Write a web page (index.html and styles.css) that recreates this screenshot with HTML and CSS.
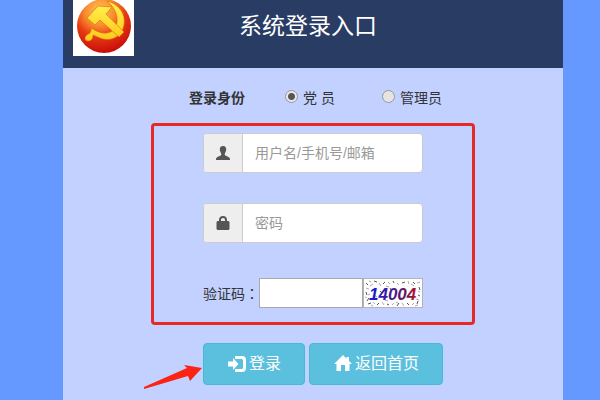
FILE: index.html
```
<!DOCTYPE html>
<html lang="zh-CN">
<head>
<meta charset="utf-8">
<meta name="viewport" content="width=device-width, initial-scale=1">
<title>系统登录入口</title>
<link rel="stylesheet" href="styles.css">
</head>
<body>
<main class="panel">
  <header class="header">
    <svg class="logo" viewBox="0 0 61 56" role="img" aria-label="党徽">
      <defs>
        <radialGradient id="ball" cx="0.42" cy="0.22" r="0.8">
          <stop offset="0" stop-color="#ffc65a"/>
          <stop offset="0.35" stop-color="#f98a2c"/>
          <stop offset="0.6" stop-color="#e53a14"/>
          <stop offset="1" stop-color="#c80a08"/>
        </radialGradient>
        <linearGradient id="gold" x1="0" y1="0" x2="0" y2="1">
          <stop offset="0" stop-color="#fff04a"/>
          <stop offset="1" stop-color="#ffc81c"/>
        </linearGradient>
      </defs>
      <rect width="61" height="56" fill="#fff"/>
      <circle cx="31" cy="26" r="27" fill="url(#ball)"/>
      <path d="M34 1C46 4 53 14 51 25C49 36 40 41 30 39C26 38 23 36 20 35C20 39 18 41 15 41C12 41 11 38 13 36C14 34 16 34 17 33L19 28C24 33 34 35 39 31C47 25 46 11 34 1Z" fill="url(#gold)" stroke="#d96a10" stroke-width="0.6"/>
      <path d="M14 18L25 6L39 7L33 14L51 32L46 37L27 20L22 25Z" fill="url(#gold)" stroke="#d96a10" stroke-width="0.6"/>
    </svg>
    <h1 class="title">系统登录入口</h1>
  </header>

  <form class="form">
    <div class="roles" role="radiogroup" aria-labelledby="role-label">
      <strong class="roles-label" id="role-label">登录身份</strong>
      <label class="role"><input class="radio" type="radio" name="role" checked>党 员</label>
      <label class="role"><input class="radio" type="radio" name="role">管理员</label>
    </div>

    <div class="credentials">
      <div class="group">
        <label class="addon" for="user" aria-label="用户名">
          <svg class="glyph" viewBox="0 0 14 14" aria-hidden="true"><path d="M7 0C9.400 0 10.300 1.600 10.200 3.600C10.100 5.600 9.300 6.600 8.800 7.400V9C9 10 14 10.600 14 13V14H0V13C0 10.600 5 10 5.200 9V7.400C4.700 6.600 3.900 5.600 3.800 3.600C3.700 1.600 4.600 0 7 0Z"/></svg>
        </label>
        <input class="field" id="user" type="text" placeholder="用户名/手机号/邮箱">
      </div>
      <div class="group">
        <label class="addon" for="password" aria-label="密码">
          <svg class="glyph" viewBox="0 0 14 14" aria-hidden="true"><path fill-rule="evenodd" d="M3 5V4C3 1.500 4.500 0 7 0S11 1.500 11 4V5H12.500L13.500 6V13L12.500 14H1.500L.5 13V6L1.500 5ZM5 5H9V4C9 2.700 8.300 2 7 2S5 2.700 5 4Z"/></svg>
        </label>
        <input class="field" id="password" type="password" placeholder="密码">
      </div>
      <div class="captcha">
        <label for="code">验证码<span class="colon" lang="zh-TW">：</span></label>
        <input class="code" id="code" type="text">
        <svg class="captcha-image" viewBox="0 0 60 30">
          <defs>
            <linearGradient id="ink" gradientUnits="userSpaceOnUse" x1="8" y1="0" x2="54" y2="0">
              <stop offset="0" stop-color="#1a1ad0"/>
              <stop offset="0.5" stop-color="#4a1a8a"/>
              <stop offset="0.75" stop-color="#641458"/>
              <stop offset="1" stop-color="#c01428"/>
            </linearGradient>
          </defs>
          <rect x="0.500" y="0.500" width="59" height="29" fill="#fff" stroke="#b4b4b4"/>
          <g fill="none" stroke-width="1">
            <path stroke="#555" d="M3 5l2 2M11 3l3 1M20 6l2-2M30 3l1 2M39 5l3-1M50 4l2 2M3 14l1 3M6 20l-2 3M5 26l3-1M14 27l2-2M24 26l2 1M34 28l2-3M44 25l2 2M54 26l1-3M56 9l1 3M55 17l2 1M17 13l2 2M27 10l1 2"/>
            <path stroke="#b5a5ad" d="M7 8l3-2M16 5l2 3M25 4l2 2M34 5l2 2M45 3l1 3M54 5l3-1M3 10l3 1M2 19l2 1M10 24l2 2M19 24l2 3M29 27l2-2M39 25l2 3M49 27l2-2M53 21l3 1M55 13l2 1M11 17l3 2M37 19l2 1M47 18l2 1"/>
            <path stroke="#9da5c8" d="M6 3l2 1M23 8l3 1M48 6l3 2M8 27l2 1M22 22l3 1M33 24l2 1M5 17l2-1M52 28l3-1"/>
          </g>
          <text class="captcha-text" x="6" y="22" fill="url(#ink)">14004</text>
        </svg>
      </div>
    </div>

    <div class="actions">
      <button class="btn" type="submit">
        <svg class="btn-icon" viewBox="0 0 18 18" aria-hidden="true"><path d="M0 6.500H5V3L10.500 9L5 15V11.500H0ZM7 1H14Q18 1 18 5V13Q18 17 14 17H7V14H13.500Q15 14 15 12.500V5.500Q15 4 13.500 4H7Z"/></svg>登录
      </button>
      <a class="btn" href="#">
        <svg class="btn-icon" viewBox="0 0 18 18" aria-hidden="true"><path d="M9 0L12.500 3.500V2H15V6L18 9H15.500V16H11V10H7V16H2.500V9H0Z"/></svg>返回首页
      </a>
      <svg class="arrow" viewBox="0 0 60 26" aria-hidden="true"><path d="M1 23L44 4L41 1L59 4L47 17L45 12L1 25Z" fill="#fb2314"/></svg>
    </div>
  </form>
</main>
</body>
</html>
```
FILE: styles.css
```
* {
  box-sizing: border-box;
}

body {
  margin: 0;
  min-height: 100vh;
  display: flex;
  justify-content: center;
  padding-left: 26px;
  background: #6699ff;
  color: #333;
  font: 14px/20px "Liberation Sans", "Noto Sans CJK SC", sans-serif;
}

.panel {
  width: 100%;
  max-width: 500px;
  background: #c2d1ff;
}

.header {
  display: grid;
  grid-template-columns: 61px 1fr 71px;
  align-items: start;
  padding: 0 10px 12px;
  background: #293c64;
}

.logo {
  width: 61px;
  height: 56px;
}

.title {
  margin: 0;
  padding-top: 10px;
  color: #fff;
  font-size: 23px;
  font-weight: 400;
  line-height: 32px;
  text-align: center;
}

.form {
  padding: 20px 88px 15px;
}

.roles {
  display: flex;
  gap: 40px;
  padding-left: 38px;
  white-space: nowrap;
}

.role {
  display: flex;
  gap: 5px;
}

.role + .role {
  margin-left: 7px;
}

.radio {
  appearance: none;
  width: 13px;
  height: 13px;
  margin: 2px 0 0;
  border: 1px solid #999;
  border-radius: 50%;
  background: #e4e4e0;
}

.radio:checked {
  background: radial-gradient(circle, #555 0 3px, #e8e8e8 4px);
}

.credentials {
  display: flex;
  flex-direction: column;
  gap: 30px;
  margin-top: 15px;
  padding: 7px 49px 14px;
  border: 3px solid #e52a25;
  border-radius: 4px;
}

.group {
  display: flex;
  height: 40px;
  border: 1px solid #ccc;
  border-radius: 4px;
  background: #fff;
  overflow: hidden;
}

.addon {
  display: flex;
  align-items: center;
  padding: 0 12px;
  border-right: 1px solid #ccc;
  background: #eee;
}

.glyph {
  width: 14px;
  height: 14px;
  fill: #555;
}

.field {
  flex: 1;
  min-width: 0;
  padding: 0 12px;
  border: 0;
  background: transparent;
  font: inherit;
}

.field::placeholder {
  color: #999;
}

.captcha {
  display: flex;
  align-items: center;
  margin-top: 5px;
  white-space: nowrap;
}

.colon {
  font-family: "Noto Sans CJK TC", sans-serif;
}

.code {
  flex: 1;
  min-width: 0;
  height: 30px;
  padding: 0 4px;
  border: 1px solid #a9a9a9;
  background: #fff;
  font: inherit;
}

.captcha-image {
  width: 60px;
  height: 30px;
}

.captcha-text {
  font: italic bold 17px "Liberation Sans", sans-serif;
}

.actions {
  position: relative;
  display: flex;
  gap: 4px;
  margin-top: 18px;
  padding-left: 52px;
}

.btn {
  display: flex;
  align-items: center;
  gap: 3px;
  height: 42px;
  padding: 0 23px 0 24px;
  border: 1px solid #46b8da;
  border-radius: 4px;
  background: #5bc0de;
  color: #fff;
  font: 16px/24px "Liberation Sans", "Noto Sans CJK SC", sans-serif;
  text-decoration: none;
  white-space: nowrap;
}

.btn-icon {
  width: 18px;
  height: 18px;
  fill: #fff;
}

.arrow {
  position: absolute;
  left: -8px;
  top: 21px;
  width: 60px;
  height: 26px;
}
```
